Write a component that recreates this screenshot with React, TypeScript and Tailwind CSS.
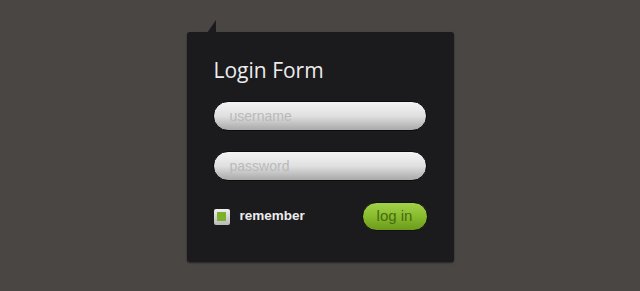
export default function App() {
  return (
    <div className="flex h-[291px] w-[640px] justify-center overflow-hidden bg-[#4a4644] pt-[32px]">
      <div className="relative h-[230px] w-[267px] rounded-[3px] bg-[#1b1a1c] pl-[27px] pr-[26px] pt-[26px] shadow-[0_1px_2px_rgba(0,0,0,0.5)]">
        {/* speech tab */}
        <svg className="absolute -top-[12px] left-[20px]" width="10" height="13" viewBox="0 0 10 13">
          <path d="M0 13 L9 0 L9 13 Z" fill="#1b1a1c" />
        </svg>
        <h1 className="text-[21px] font-medium leading-[24px] text-[#ececec] [font-family:'Open_Sans',sans-serif]">Login Form</h1>
        <form className="mt-[19px] flex flex-col gap-[20px]">
          <input
            placeholder="username"
            className="-ml-[1px] h-[30px] w-[214px] rounded-full border border-[#0c0c0c] bg-gradient-to-b from-[#f3f3f3] via-[#e0e0e0] to-[#a9a9a9] px-[16px] text-[14px] text-[#555] outline-none placeholder:text-[#b9b9b9] [font-family:'Liberation_Sans',sans-serif]"
          />
          <input
            placeholder="password"
            type="text"
            className="-ml-[1px] h-[30px] w-[214px] rounded-full border border-[#0c0c0c] bg-gradient-to-b from-[#f3f3f3] via-[#e0e0e0] to-[#a9a9a9] px-[16px] text-[14px] text-[#555] outline-none placeholder:text-[#b9b9b9] [font-family:'Liberation_Sans',sans-serif]"
          />
          <div className="mt-[1px] flex items-center justify-between">
            <label className="flex items-center gap-[10px]">
              <span className="flex h-[16px] w-[16px] items-center justify-center rounded-[2px] bg-gradient-to-b from-[#f0f0f0] to-[#b9b9b9]">
                <span className="h-[9px] w-[9px] bg-[#7fb02c]" />
              </span>
              <span className="text-[13.5px] font-bold text-[#ececec] [font-family:'Liberation_Sans',sans-serif]">remember</span>
            </label>
            <button
              type="button"
              className="h-[29px] w-[66px] rounded-full border border-[#111] bg-gradient-to-b from-[#a3d14a] via-[#88bb2c] to-[#6c9b1c] text-[15px] text-[#476b12] [font-family:'Liberation_Sans',sans-serif]"
            >
              log in
            </button>
          </div>
        </form>
      </div>
    </div>
  )
}
